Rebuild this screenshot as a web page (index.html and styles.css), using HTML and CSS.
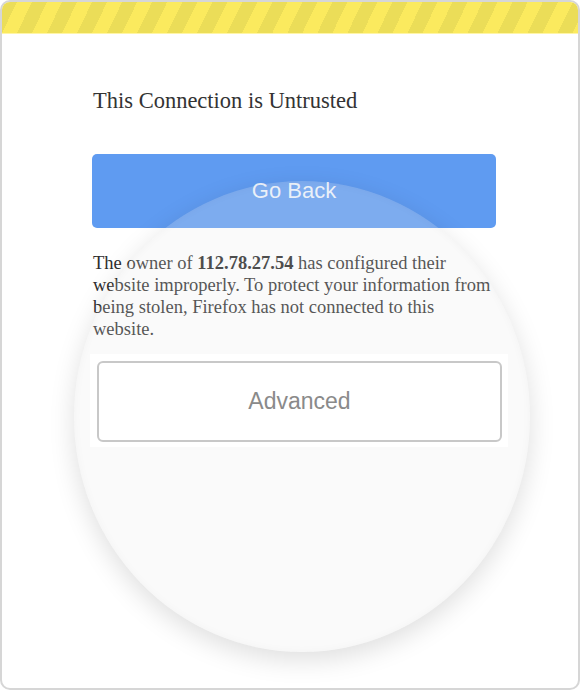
FILE: index.html
```html
<!DOCTYPE html>
<html lang="en">
<head>
<meta charset="utf-8">
<title>This Connection is Untrusted</title>
<link rel="stylesheet" href="styles.css">
</head>
<body>
<div class="card">
  <div class="stripes"></div>
  <div class="content">
    <h1 class="title">This Connection is Untrusted</h1>
    <button class="btn-back">Go Back</button>
    <p class="desc">The owner of <b>112.78.27.54</b> has configured their website improperly. To protect your information from being stolen, Firefox has not connected to this website.</p>
    <div class="adv-wrap">
      <button class="btn-adv">Advanced</button>
    </div>
  </div>
  <div class="lens"></div>
</div>
</body>
</html>
```

FILE: styles.css
```css
* { box-sizing: border-box; }
html, body { margin: 0; padding: 0; background: #ffffff; }
.card {
  position: relative;
  width: 580px;
  height: 690px;
  border: 2px solid #d6d6d6;
  border-radius: 10px;
  overflow: hidden;
  background: #ffffff;
}
.stripes {
  height: 32px;
  background: repeating-linear-gradient(116deg, #ebdd58 0 13.5px, #fbea5e 13.5px 27px);
  border-bottom: 1px solid #fff5a6;
}
.content {
  padding: 0 82px 0 90px;
}
.title {
  margin: 55px 0 0 1px;
  font-family: "Liberation Serif", "Times New Roman", serif;
  font-weight: normal;
  font-size: 22.5px;
  line-height: 24px;
  color: #333333;
}
.btn-back {
  display: block;
  width: 404px;
  height: 74px;
  margin: 41px 0 0 0;
  border: 0;
  border-radius: 5px;
  background: #5f9bf1;
  color: rgba(255, 255, 255, 0.88);
  font-family: "Liberation Sans", Arial, sans-serif;
  font-size: 22px;
  padding: 0;
}
.desc {
  margin: 24px 0 0 1px;
  font-family: "Liberation Serif", "Times New Roman", serif;
  font-size: 18.5px;
  line-height: 22px;
  color: #2e2e2e;
}
.desc b { font-weight: bold; color: #222; }
.adv-wrap {
  position: relative;
  z-index: 2;
  margin: 14px -12px 0 -2px;
  padding: 7px 6px 5px 7px;
  background: #ffffff;
}
.btn-adv {
  display: block;
  width: 100%;
  height: 81px;
  border: 2px solid #c8c8c8;
  border-radius: 6px;
  background: #ffffff;
  color: #8a8a8a;
  font-family: "Liberation Sans", Arial, sans-serif;
  font-size: 23px;
  padding: 0;
}
.lens {
  position: absolute;
  z-index: 1;
  left: 72px;
  top: 179px;
  width: 456px;
  height: 471px;
  border-radius: 50%;
  background: rgba(230, 230, 233, 0.22);
  box-shadow: 0 8px 26px rgba(0, 0, 0, 0.13), inset 0 0 10px rgba(0, 0, 0, 0.03);
}
```
